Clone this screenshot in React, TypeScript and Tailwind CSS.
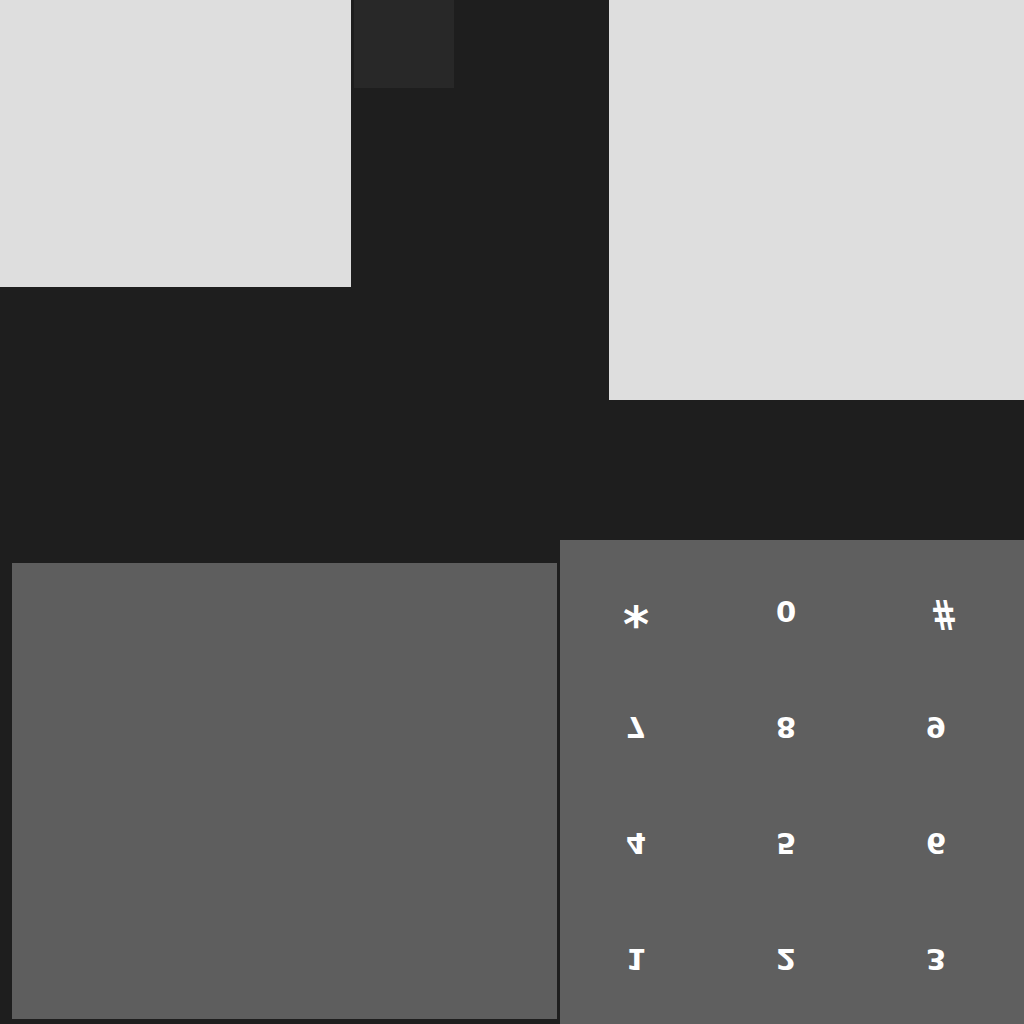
import React from "react";

const rows = [
  ["*", "0", "#"],
  ["7", "8", "9"],
  ["4", "5", "6"],
  ["1", "2", "3"],
];

function glyphClass(k: string) {
  if (k === "*") return "text-[50px] mt-[-4px]";
  if (k === "#") return "text-[31px] ml-[16px] mt-[6px] [transform:scaleY(-1.3)]";
  return "text-[29px]";
}

export default function App() {
  return (
    <div className="w-[1024px] h-[1024px] bg-[#1e1e1e] overflow-hidden flex flex-col">
      <div className="h-[540px] flex items-start">
        <div className="w-[351px] h-[287px] bg-[#dedede]" />
        <div className="ml-[3px] w-[100px] h-[88px] bg-[#282828]" />
        <div className="ml-[155px] w-[415px] h-[400px] bg-[#dedede]" />
      </div>
      <div className="h-[484px] flex items-start">
        <div className="ml-[12px] mt-[23px] w-[545px] h-[456px] bg-[#5e5e5e]" />
        <div className="ml-[3px] w-[464px] h-[484px] bg-[#5f5f5f] pt-[12px] pl-[1px]">
          <div className="grid grid-cols-[150px_150px_150px] auto-rows-[116px]">
            {rows.flat().map((k, i) => (
              <div key={i} className="flex items-center justify-center">
                <span
                  className={
                    "inline-block text-white font-bold leading-none [transform:scaleY(-1)] " +
                    glyphClass(k)
                  }
                  style={{ fontFamily: '"DejaVu Sans", sans-serif' }}
                >
                  {k}
                </span>
              </div>
            ))}
          </div>
        </div>
      </div>
    </div>
  );
}
